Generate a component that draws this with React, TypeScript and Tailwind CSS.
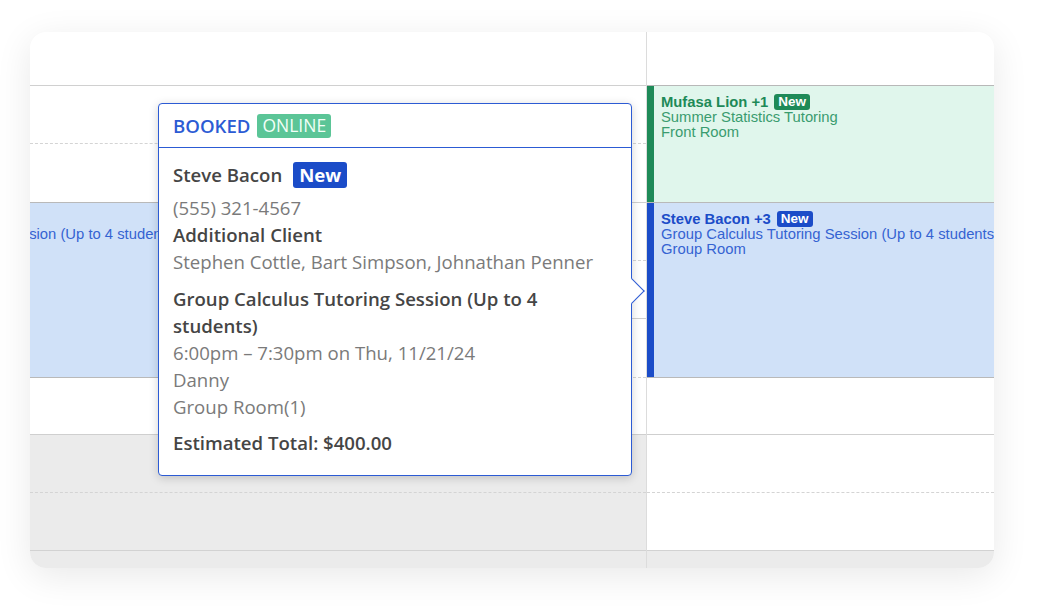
import React from 'react'

type Slot = { h: string; line: string; bg: string }

// half-hour rows below the header; solid lines on the hour, dashed on the half
const leftSlots: Slot[] = [
    { h: 'h-[58px]', line: 'border-b border-dashed border-[#d4d4d4]', bg: 'bg-white' },
    { h: 'h-[59px]', line: 'border-b border-solid border-[#cfcfcf]', bg: 'bg-white' },
    { h: 'h-[58px]', line: 'border-b border-dashed border-[#d4d4d4]', bg: 'bg-white' },
    { h: 'h-[58px]', line: 'border-b border-solid border-[#cfcfcf]', bg: 'bg-white' },
    { h: 'h-[59px]', line: 'border-b border-dashed border-[#d4d4d4]', bg: 'bg-white' },
    { h: 'h-[57px]', line: 'border-b border-solid border-[#cfcfcf]', bg: 'bg-white' },
    { h: 'h-[58px]', line: 'border-b border-dashed border-[#d4d4d4]', bg: 'bg-[#ebebeb]' },
    { h: 'h-[58px]', line: 'border-b border-solid border-[#d2d2d2]', bg: 'bg-[#ebebeb]' },
]

const rightSlots: Slot[] = leftSlots.map((s) => ({ ...s, bg: 'bg-white' }))

function Event({
    name,
    service,
    room,
    tone,
    className
}: {
    name: string;
    service: string;
    room: string;
    tone: 'green' | 'blue';
    className: string;
}) {
    const green = tone === 'green'
    return (
        <div className={`absolute flex ${green ? 'bg-[#e0f6ec]' : 'bg-[#d0e1f8]'} ${className}`}>
            <div className={`w-[7px] shrink-0 ${green ? 'bg-[#1e8a58]' : 'bg-[#1b4cc8]'}`} />
            <div className="pl-[7px] pt-[8px] text-[14.8px] leading-[15px] whitespace-nowrap font-['Liberation_Sans',Arial,sans-serif]">
                <div className={`flex items-center gap-[6px] font-bold ${green ? 'text-[#1e8a58]' : 'text-[#1b4cc8]'}`}>
                    {name}
                    <span className={`px-[4px] rounded-[3px] text-white text-[13.5px] leading-[16px] ${green ? 'bg-[#1e8a58]' : 'bg-[#1b4cc8]'}`}>New</span>
                </div>
                <div className={green ? 'text-[#3a9c6f]' : 'text-[#3563d2]'}>{service}</div>
                <div className={green ? 'text-[#3a9c6f]' : 'text-[#3563d2]'}>{room}</div>
            </div>
        </div>
    )
}

function Slots({ slots }: { slots: Slot[] }) {
    return (
        <>
            {slots.map((s, i) => (
                <div key={i} className={`${s.h} ${s.line} ${s.bg} shrink-0`} />
            ))}
        </>
    )
}

function BookingPopover() {
    return (
        <div className="absolute left-[128px] top-[71px] w-[474px] bg-white border border-[#2c5bd4] rounded-[4px] shadow-[0_2px_10px_rgba(0,0,0,0.18)] font-['Open_Sans',sans-serif] text-[18.6px] leading-[27px]">
            <div className="h-[44px] px-[14px] flex items-center gap-[7px] border-b border-[#2c5bd4]">
                <span className="text-[#2c5bd4] font-semibold">BOOKED</span>
                <span className="h-[24px] px-[5px] flex items-center rounded-[3px] bg-[#5bc597] text-[#f2fff8] text-[17.5px]">ONLINE</span>
            </div>
            <div className="px-[14px] pt-[13px] pb-[19px]">
                <div className="h-[27px] flex items-center gap-[11px]">
                    <span className="text-[#454545] font-semibold">Steve Bacon</span>
                    <span className="h-[26px] px-[6px] flex items-center rounded-[3px] bg-[#1b4cc8] text-white font-bold">New</span>
                </div>
                <div className="mt-[6px] text-[#7a7a7a]">(555) 321-4567</div>
                <div className="text-[#454545] font-semibold">Additional Client</div>
                <div className="text-[#7a7a7a]">Stephen Cottle, Bart Simpson, Johnathan Penner</div>
                <div className="mt-[10px] text-[#454545] font-semibold">
                    Group Calculus Tutoring Session (Up to 4<br />students)
                </div>
                <div className="text-[#7a7a7a]">6:00pm – 7:30pm on Thu, 11/21/24</div>
                <div className="text-[#7a7a7a]">Danny</div>
                <div className="text-[#7a7a7a]">Group Room(1)</div>
                <div className="mt-[9px] text-[#454545] font-semibold">Estimated Total: $400.00</div>
            </div>
            {/* pointer toward the selected event */}
            <div className="absolute right-[-10px] top-[178px] w-[18px] h-[18px] bg-white border-t border-r border-[#2c5bd4] rotate-45" />
        </div>
    )
}

export default function App() {
    return (
        <div className="min-h-screen bg-white pt-[32px] pl-[30px]">
            <div className="relative w-[964px] h-[536px] rounded-2xl bg-white overflow-hidden shadow-[0_8px_36px_rgba(0,0,0,0.09)] flex">
                <div className="w-[617px] shrink-0 border-r border-[#dcdcdc] flex flex-col">
                    <div className="h-[54px] shrink-0 border-b border-[#d0d0d0]" />
                    <div className="relative flex-1 flex flex-col">
                        <Slots slots={leftSlots} />
                        <div className="flex-1 bg-[#ebebeb]" />
                        <Event
                            tone="blue"
                            name="Steve Bacon +3"
                            service="Group Calculus Tutoring Session (Up to 4 students)"
                            room="Group Room"
                            className="left-[-204px] right-[30px] top-[116px] h-[176px] border-y border-[#b9b9b9]"
                        />
                    </div>
                </div>
                <div className="flex-1 flex flex-col">
                    <div className="h-[54px] shrink-0 border-b border-[#b8b8b8]" />
                    <div className="relative flex-1 flex flex-col">
                        <Slots slots={rightSlots} />
                        <div className="flex-1 bg-[#ebebeb]" />
                        <Event
                            tone="green"
                            name="Mufasa Lion +1"
                            service="Summer Statistics Tutoring"
                            room="Front Room"
                            className="left-0 right-0 top-0 h-[116px]"
                        />
                        <Event
                            tone="blue"
                            name="Steve Bacon +3"
                            service="Group Calculus Tutoring Session (Up to 4 students)"
                            room="Group Room"
                            className="left-0 right-0 top-[116px] h-[176px] border-y border-[#b9b9b9]"
                        />
                    </div>
                </div>
                <BookingPopover />
            </div>
        </div>
    )
}
